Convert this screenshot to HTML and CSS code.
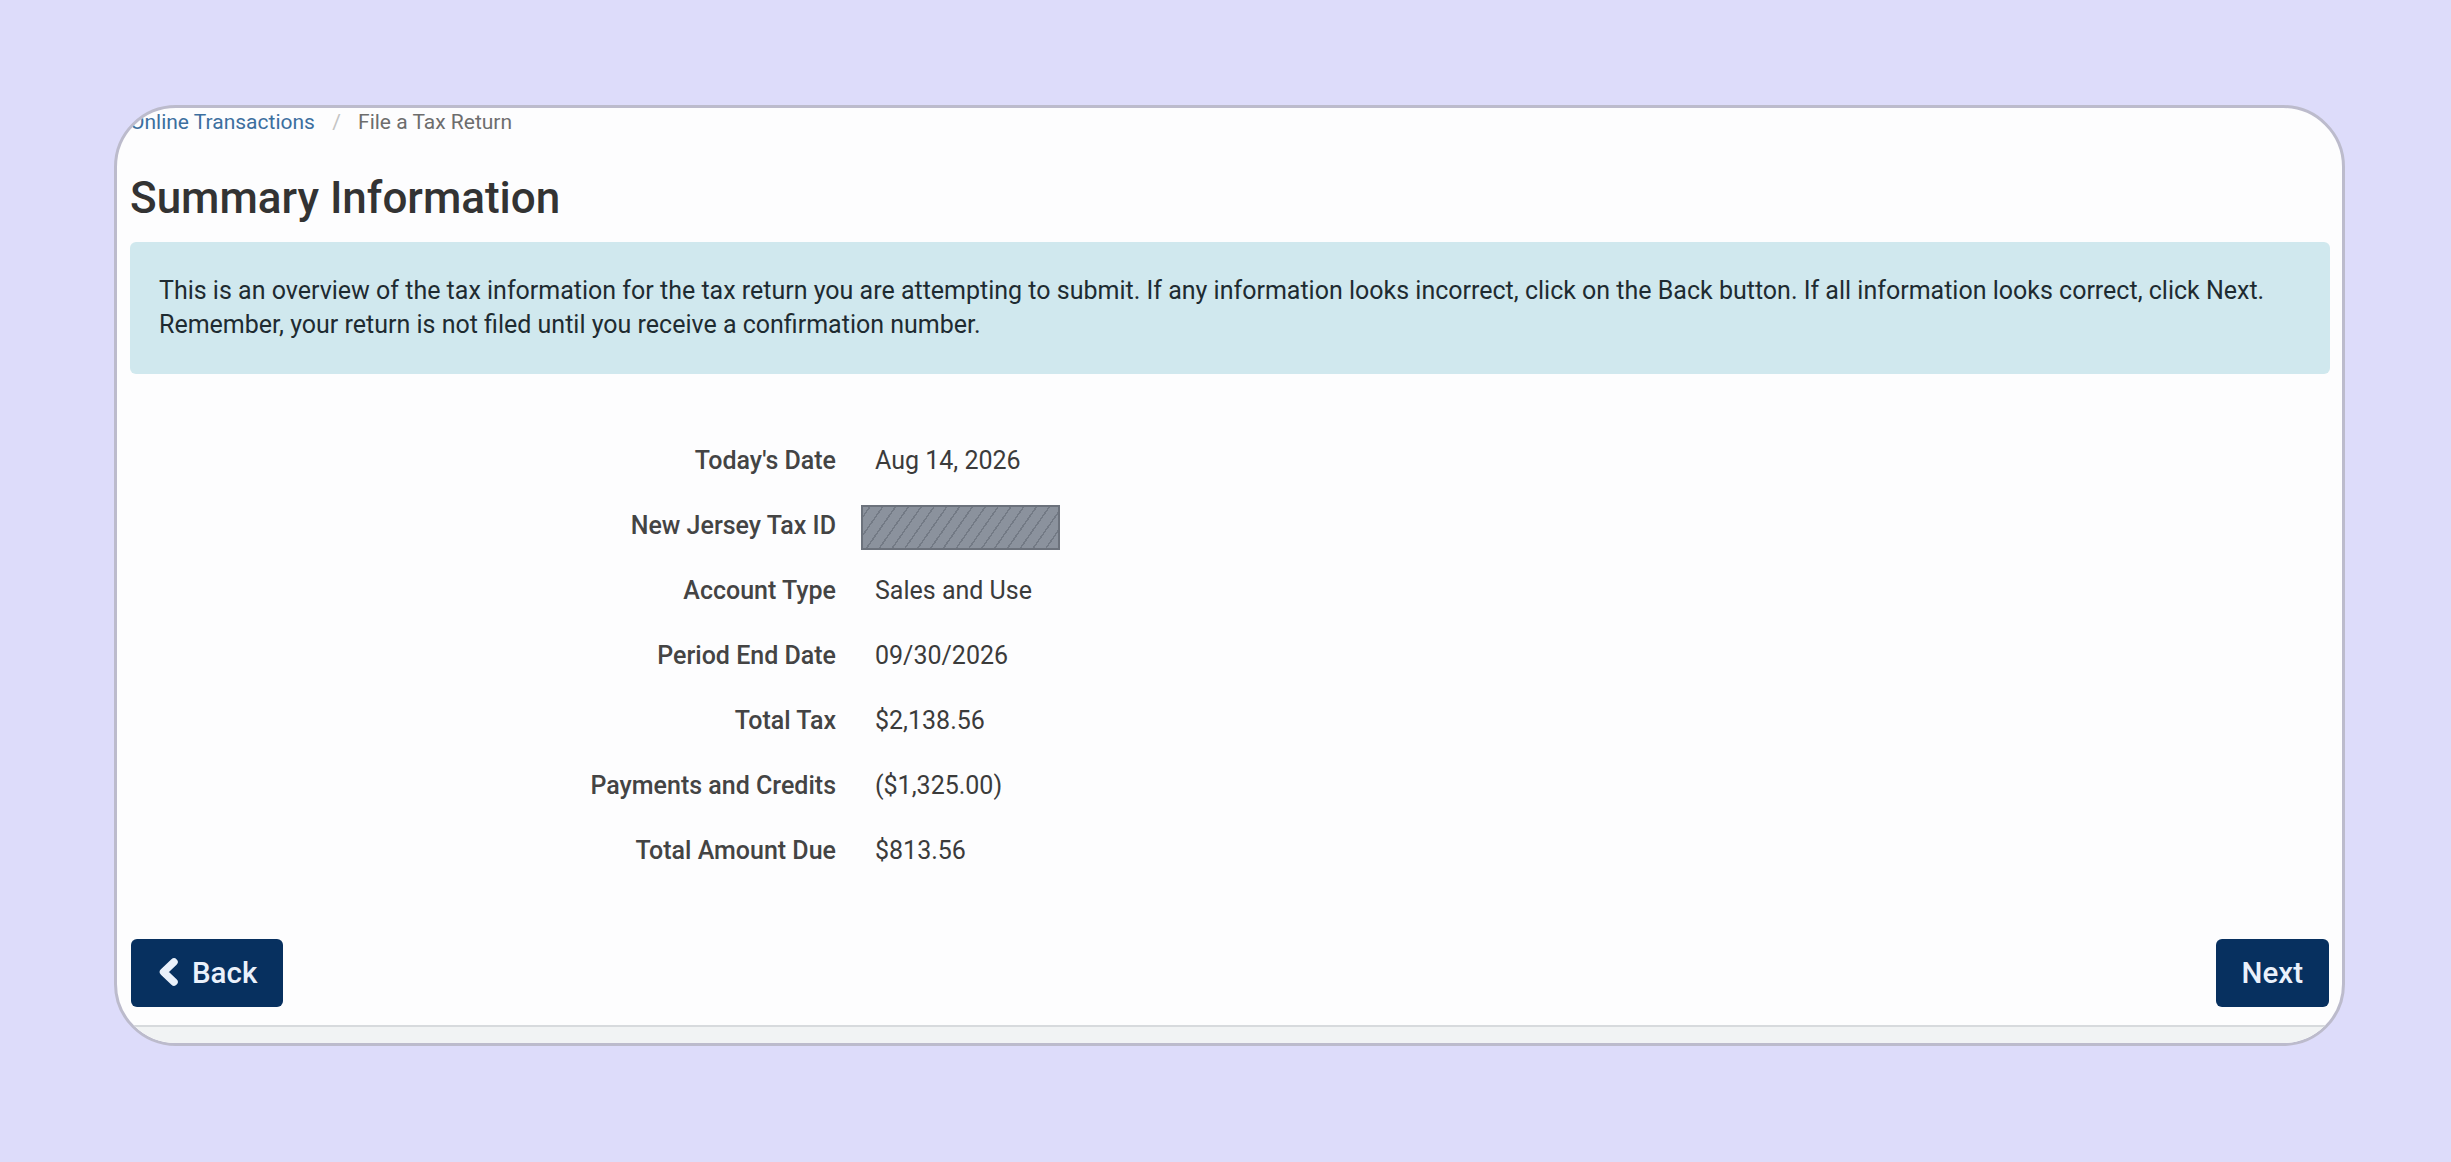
FILE: index.html
```html
<!DOCTYPE html>
<html lang="en">
<head>
    <meta charset="UTF-8">
    <meta name="viewport" content="width=device-width, initial-scale=1.0">
    <title>Summary Information</title>
    <link rel="stylesheet" href="styles.css">
</head>
<body>
    <div class="card">
        <!-- Breadcrumb -->
        <div class="crumbs">
            <a href="#">Online Transactions</a>
            <span class="sep">/</span>
            <span class="current">File a Tax Return</span>
        </div>

        <h1>Summary Information</h1>

        <div class="alert">
            This is an overview of the tax information for the tax return you are attempting to submit. If any information looks incorrect, click on the Back button. If all information looks correct, click Next.<br>
            Remember, your return is not filed until you receive a confirmation number.
        </div>

        <!-- Summary rows -->
        <div class="summary">
            <div class="label">Today's Date</div>
            <div class="value">Aug 14, 2026</div>

            <div class="label">New Jersey Tax ID</div>
            <div class="value value-redacted"><span class="redacted"></span></div>

            <div class="label">Account Type</div>
            <div class="value">Sales and Use</div>

            <div class="label">Period End Date</div>
            <div class="value">09/30/2026</div>

            <div class="label">Total Tax</div>
            <div class="value">$2,138.56</div>

            <div class="label">Payments and Credits</div>
            <div class="value">($1,325.00)</div>

            <div class="label">Total Amount Due</div>
            <div class="value">$813.56</div>
        </div>

        <div class="actions">
            <button class="btn">
                <svg class="chev" width="24" height="28" viewBox="0 0 24 28">
                    <polyline points="17,4 6.5,14 17,24" fill="none" stroke="currentColor" stroke-width="7.5" stroke-linecap="round" stroke-linejoin="round"/>
                </svg>
                Back
            </button>
            <button class="btn">Next</button>
        </div>

        <div class="footer-strip"></div>
    </div>
</body>
</html>
```

FILE: styles.css
```css
body {
    margin: 0;
    padding: 0;
    background-color: #dddcfa;
    font-family: Roboto, "Liberation Sans", Arial, sans-serif;
    height: 1162px;
    overflow: hidden;
}

.card {
    box-sizing: border-box;
    width: 2231px;
    margin: 105px 0 0 114px;
    background: #fdfdfe;
    border: 3px solid #bcbbcc;
    border-radius: 62px;
    overflow: hidden;
    display: flex;
    flex-direction: column;
}

/* Breadcrumb */
.crumbs {
    padding: 0 13px;
    font-size: 21px;
    line-height: 28px;
    color: #6d6d6d;
}
.crumbs a {
    color: #3c6f9f;
    text-decoration: none;
}
.crumbs .sep {
    color: #c4c4c4;
    padding: 0 12px;
}

h1 {
    margin: 36px 0 0;
    padding: 0 13px;
    font-size: 44px;
    line-height: 53px;
    font-weight: 500;
    color: #333333;
}

/* Info alert */
.alert {
    margin: 17px 12px 0 13px;
    padding: 32px 29px;
    background: #d0e8ee;
    border-radius: 6px;
    font-size: 25px;
    line-height: 34px;
    color: #1e2b31;
}

/* Summary rows */
.summary {
    margin-top: 54px;
    padding: 0 13px;
    display: grid;
    grid-template-columns: 706px 1fr;
    grid-auto-rows: 65px;
    column-gap: 25px;
    align-items: center;
    font-size: 25px;
}
.label {
    text-align: right;
    font-weight: 500;
    color: #444444;
}
.value {
    padding-left: 14px;
    color: #3b3b3b;
}
.value-redacted {
    padding-left: 0;
    display: flex;
    padding-top: 4px;
}
.redacted {
    box-sizing: border-box;
    width: 199px;
    height: 45px;
    border: 2px solid #6c727c;
    background-color: #8b929d;
    background-image: repeating-linear-gradient(-55deg, transparent 0 9px, #737a85 9px 10.5px);
}

/* Buttons */
.actions {
    margin-top: 56px;
    padding: 0 13px 0 14px;
    display: flex;
    justify-content: space-between;
}
.btn {
    height: 68px;
    padding: 0 26px;
    border: none;
    border-radius: 6px;
    background: #07305f;
    color: #eaf1fb;
    font-family: Roboto, "Liberation Sans", Arial, sans-serif;
    font-size: 29.5px;
    font-weight: 500;
    display: flex;
    align-items: center;
    gap: 11px;
    cursor: pointer;
}
.btn .chev {
    margin-top: -2px;
}

.footer-strip {
    margin-top: 18px;
    height: 16px;
    border-top: 2px solid #d7dadd;
    background: #f1f3f4;
}
```
